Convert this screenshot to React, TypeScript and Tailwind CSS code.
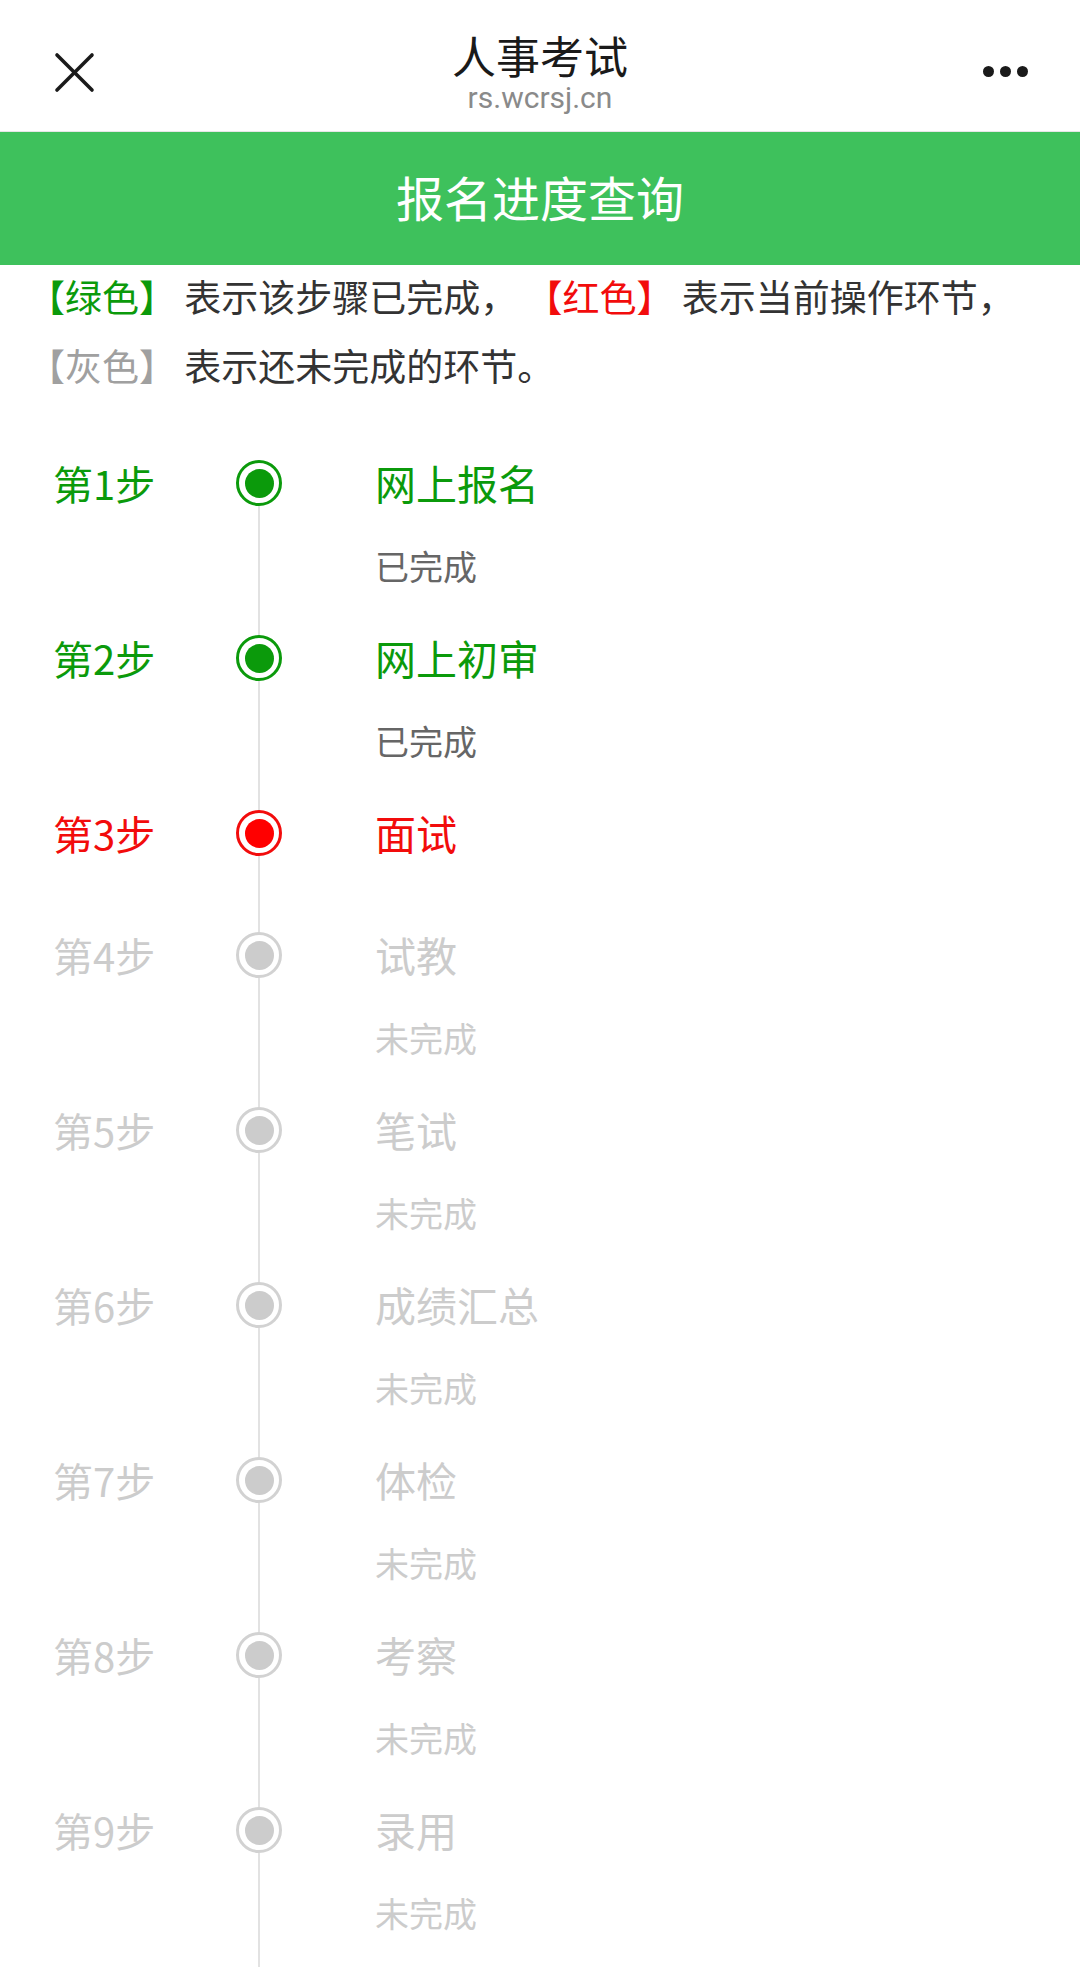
import React from 'react';

type StepState = 'done' | 'current' | 'todo';

interface Step {
  no: number;
  name: string;
  state: StepState;
  note?: string;
}

const STEPS: Step[] = [
  { no: 1, name: '网上报名', state: 'done', note: '已完成' },
  { no: 2, name: '网上初审', state: 'done', note: '已完成' },
  { no: 3, name: '面试', state: 'current' },
  { no: 4, name: '试教', state: 'todo', note: '未完成' },
  { no: 5, name: '笔试', state: 'todo', note: '未完成' },
  { no: 6, name: '成绩汇总', state: 'todo', note: '未完成' },
  { no: 7, name: '体检', state: 'todo', note: '未完成' },
  { no: 8, name: '考察', state: 'todo', note: '未完成' },
  { no: 9, name: '录用', state: 'todo', note: '未完成' },
];

const textColor: Record<StepState, string> = {
  done: 'text-[#0b9a0b]',
  current: 'text-[#f20c0c]',
  todo: 'text-[#cccccc]',
};

const ringColor: Record<StepState, string> = {
  done: 'border-[#0b9a0b]',
  current: 'border-[#f20c0c]',
  todo: 'border-[#d2d2d2]',
};

const fillColor: Record<StepState, string> = {
  done: 'bg-[#0b9a0b]',
  current: 'bg-[#ff0000]',
  todo: 'bg-[#cccccc]',
};

const noteColor: Record<StepState, string> = {
  done: 'text-[#666666]',
  current: 'text-[#666666]',
  todo: 'text-[#cccccc]',
};

const StepRow: React.FC<{ step: Step; first: boolean }> = ({ step, first }) => {
  return (
    <div className={`flex pl-[53px] ${step.note ? 'h-[175px]' : 'h-[122px]'}`}>
      <div className={`w-[183px] h-[64px] flex items-center text-[40px] ${textColor[step.state]}`}>
        第{step.no}步
      </div>
      <div className="w-[46px] flex flex-col items-center">
        <div className={`w-[2px] h-[9px] ${first ? 'bg-transparent' : 'bg-[#e2e2e2]'}`} />
        <div className={`w-[46px] h-[46px] rounded-full border-[3px] bg-white flex items-center justify-center ${ringColor[step.state]}`}>
          <div className={`w-[29px] h-[29px] rounded-full ${fillColor[step.state]}`} />
        </div>
        <div className="w-[2px] flex-1 bg-[#e2e2e2]" />
      </div>
      <div className="ml-[93px] flex flex-col">
        <div className={`h-[64px] flex items-center text-[41px] ${textColor[step.state]}`}>{step.name}</div>
        {step.note && (
          <div className={`mt-[28px] h-[44px] flex items-center text-[34px] ${noteColor[step.state]}`}>{step.note}</div>
        )}
      </div>
    </div>
  );
};

export default function App() {
  return (
    <div className="w-[1080px] min-h-[1967px] bg-white font-['Noto_Sans_CJK_SC','Noto_Sans',sans-serif] overflow-hidden">
      <header className="h-[132px] grid grid-cols-[1fr_auto_1fr] border-b border-[#e6e6e6] bg-white">
        <div className="pl-[54px] pt-[52px]">
          <svg width="41" height="41" viewBox="0 0 41 41" fill="none" stroke="#1a1a1a" strokeWidth="3.6" strokeLinecap="round">
            <line x1="3" y1="3" x2="38" y2="38" />
            <line x1="38" y1="3" x2="3" y2="38" />
          </svg>
        </div>
        <div className="pt-[30px] flex flex-col items-center">
          <div className="text-[44px] leading-[50px] text-[#1a1a1a]">人事考试</div>
          <div className="text-[30px] leading-[36px] text-[#8a8a8a] font-['Roboto',sans-serif]">rs.wcrsj.cn</div>
        </div>
        <div className="flex justify-end pr-[52px] pt-[66px]">
          <div className="flex gap-[6px]">
            <span className="w-[11px] h-[11px] rounded-full bg-[#1a1a1a]" />
            <span className="w-[11px] h-[11px] rounded-full bg-[#1a1a1a]" />
            <span className="w-[11px] h-[11px] rounded-full bg-[#1a1a1a]" />
          </div>
        </div>
      </header>

      <div className="h-[133px] pb-[6px] bg-[#3ec15c] flex items-center justify-center text-white text-[48px]">
        报名进度查询
      </div>

      <div className="-mt-[3px] pl-[28px] text-[37px] leading-[69px] text-[#333333]">
        <div>
          <span className="text-[#0b9a0b]">【绿色】</span> 表示该步骤已完成， <span className="text-[#f20c0c]">【红色】</span> 表示当前操作环节，
        </div>
        <div>
          <span className="text-[#a0a0a0]">【灰色】</span> 表示还未完成的环节。
        </div>
      </div>

      <div className="mt-[51px]">
        {STEPS.map((s, i) => (
          <StepRow key={s.no} step={s} first={i === 0} />
        ))}
      </div>
    </div>
  );
}
